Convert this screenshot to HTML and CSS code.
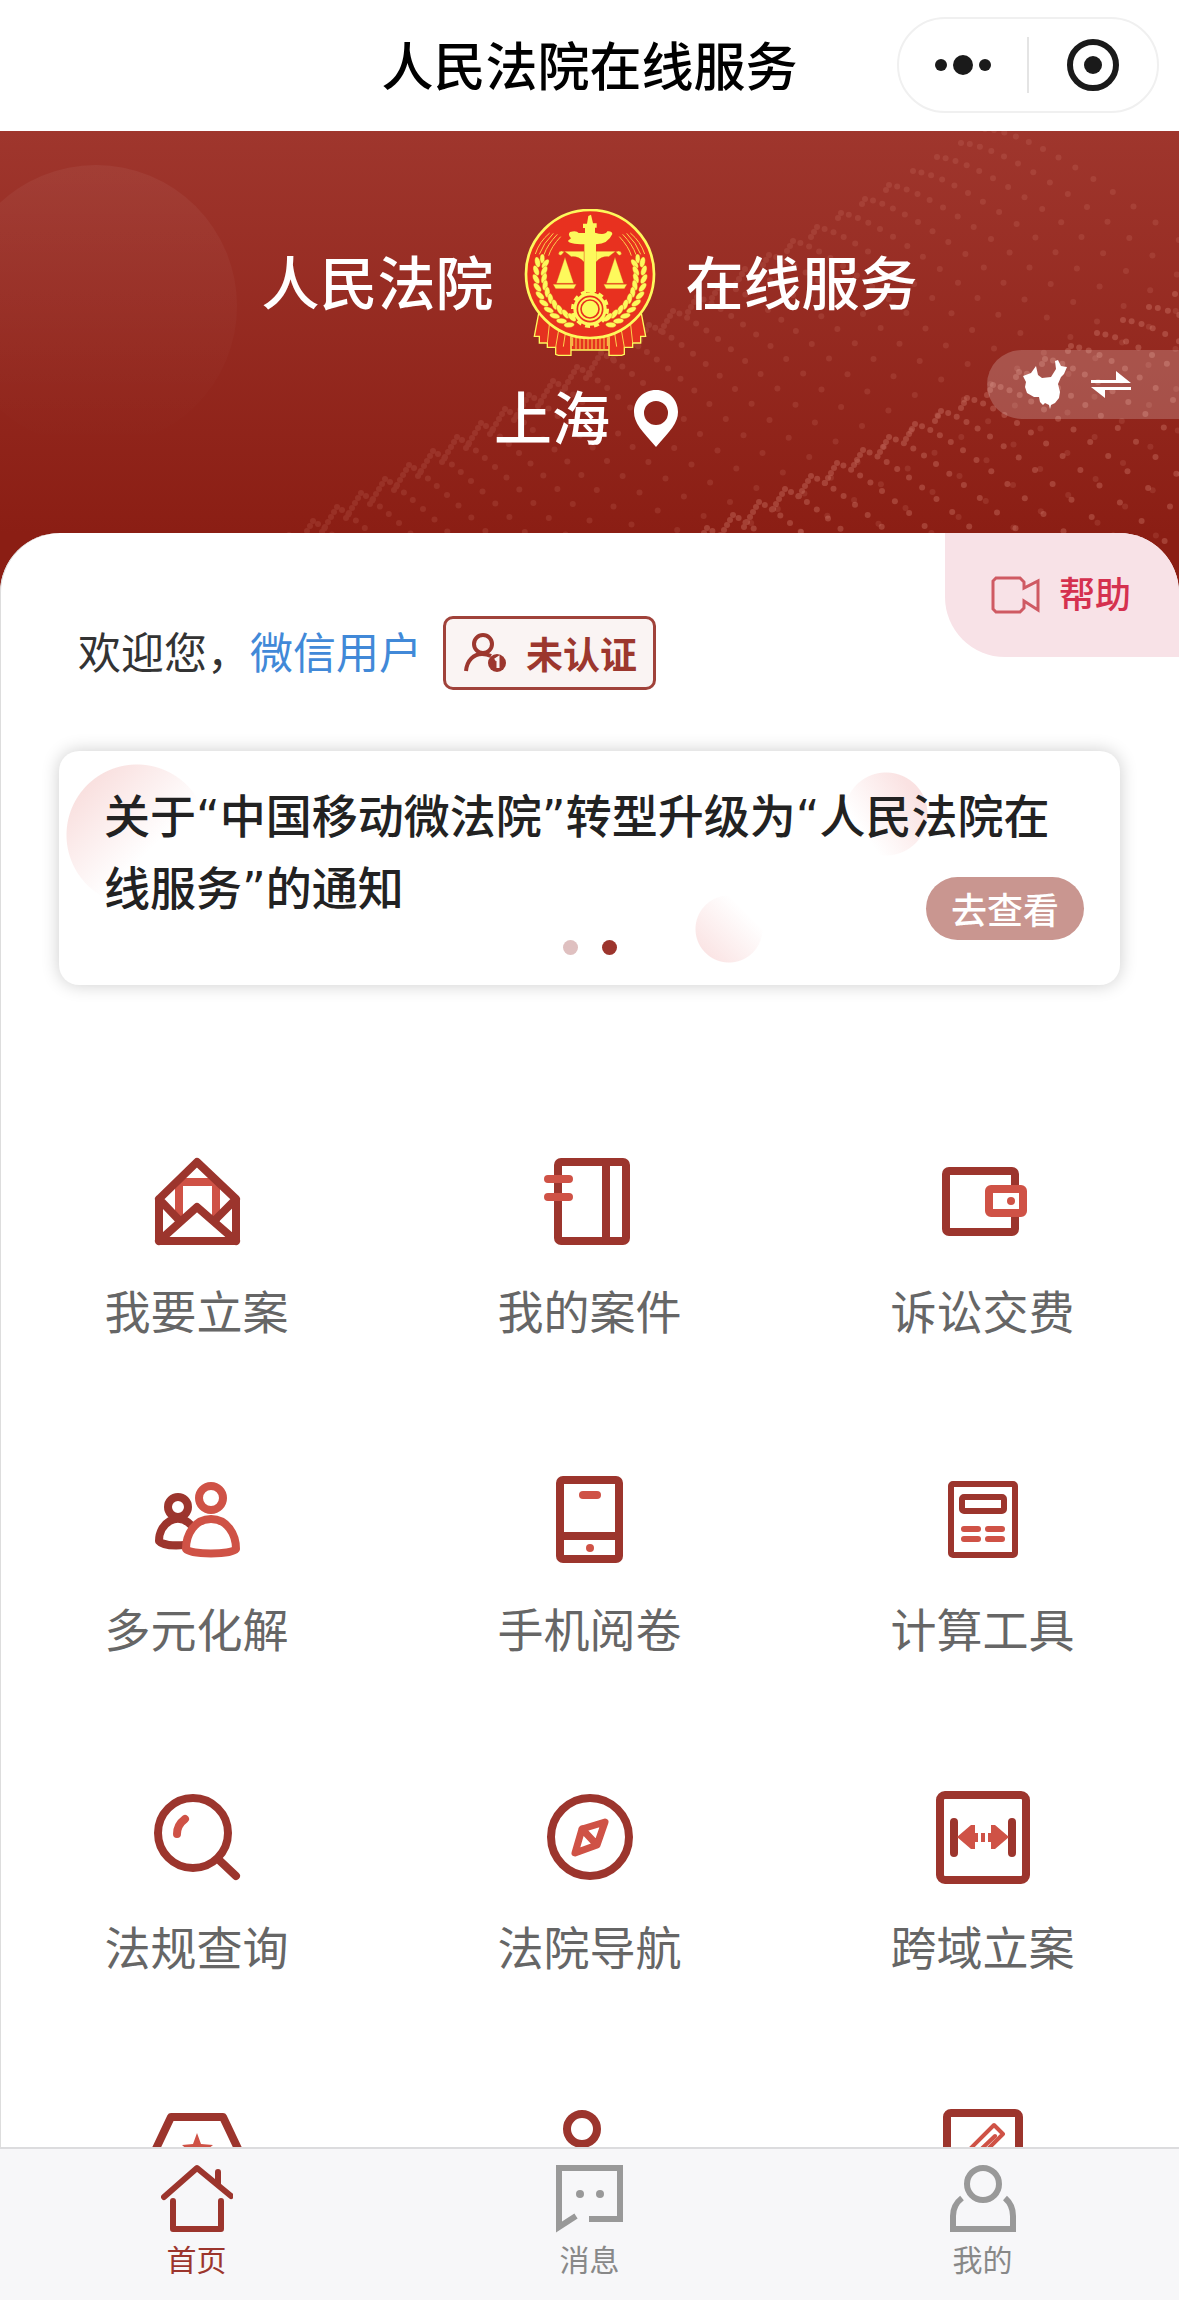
FILE: index.html
```html
<!doctype html>
<html lang="zh-CN">
<head>
    <meta charset="UTF-8">
    <meta name="viewport" content="width=device-width, initial-scale=1.0">
    <title>人民法院在线服务</title>
    <link rel="stylesheet" href="styles.css">
</head>
<body>

<header class="nav-bar">
    <h1>人民法院在线服务</h1>
    <div class="capsule">
        <button type="button" aria-label="更多">
            <svg width="56" height="56" viewBox="0 0 56 56"><circle cx="6" cy="28" r="6"/><circle cx="28" cy="28" r="10"/><circle cx="50" cy="28" r="6"/></svg>
        </button>
        <button type="button" aria-label="关闭">
            <svg width="56" height="56" viewBox="0 0 56 56"><circle class="ring" cx="28" cy="28" r="23"/><circle cx="28" cy="28" r="9"/></svg>
        </button>
    </div>
</header>

<main>
    <section class="banner">
        <svg class="waves" width="1179" height="469" viewBox="0 0 1179 469" aria-hidden="true">
            <defs>
                <linearGradient id="moon" x1="0" y1="0" x2="0" y2="1">
                    <stop offset="0" stop-color="#fff" stop-opacity=".05"/>
                    <stop offset="1" stop-color="#fff" stop-opacity="0"/>
                </linearGradient>
            </defs>
            <circle cx="96" cy="175" r="141" fill="url(#moon)"/>
            <g id="dots"></g>
        </svg>
        <div class="brand">
            <span>人民法院</span>
            <svg class="emblem" width="132" height="147" viewBox="72 57 396 441" role="img" aria-label="法院徽章">
                <defs>
                    <g id="grain">
                        <ellipse cx="108" cy="250" rx="8" ry="16" transform="rotate(-24 108 250)"/>
                        <ellipse cx="132" cy="250" rx="8" ry="16" transform="rotate(24 132 250)"/>
                    </g>
                    <g id="wheat">
                        <ellipse cx="127" cy="206" rx="7" ry="14"/>
                        <use href="#grain" transform="rotate(12 270 255)"/>
                        <use href="#grain" transform="rotate(3 270 255)"/>
                        <use href="#grain" transform="rotate(-6 270 255)"/>
                        <use href="#grain" transform="rotate(-15 270 255)"/>
                        <use href="#grain" transform="rotate(-24 270 255)"/>
                        <use href="#grain" transform="rotate(-33 270 255)"/>
                        <use href="#grain" transform="rotate(-42 270 255)"/>
                        <use href="#grain" transform="rotate(-51 270 255)"/>
                        <use href="#grain" transform="rotate(-60 270 255)"/>
                        <use href="#grain" transform="rotate(-69 270 255)"/>
                    </g>
                    <g id="half">
                        <path class="red" d="M116 370L103 439H118V459H142V472H167V493L175 496H213V440"/>
                        <path class="thin" d="M148 404L142 459M176 420L167 472M196 430L190 470"/>
                        <path class="thin" d="M218 442V468M228 444V478M240 444V480M252 446V480M264 446V480"/>
                    </g>
                    <g id="scale">
                        <path class="thin" d="M106 192Q118 155 149 129M118 193Q130 160 160 130M132 194Q142 164 172 133M146 197Q154 170 182 140"/>
                        <path d="M252 184H200Q192 182 189 190Q182 200 176 193Q174 184 184 183L196 186L214 200Q236 198 252 216Z"/>
                        <path d="M195 202L169 280H221ZM159 283H229L222 296H167Z"/>
                    </g>
                </defs>
                <path class="red" d="M210 430H330V480H210Z"/>
                <use href="#half"/>
                <use href="#half" transform="matrix(-1 0 0 1 540 0)"/>
                <circle class="disc" cx="270" cy="252" r="192"/>
                <g fill="#fdf95c">
                    <use href="#wheat"/>
                    <use href="#wheat" transform="matrix(-1 0 0 1 540 0)"/>
                    <use href="#scale"/>
                    <use href="#scale" transform="matrix(-1 0 0 1 540 0)"/>
                    <path d="M265 78L273 74L279 100H290V113H285V128Q315 138 322 124Q336 122 337 132Q324 162 288 163V306H253V163Q205 162 204 152L213 145Q202 134 210 126Q230 121 236 129H255V114H249V101H261Z"/>
                    <circle cx="270" cy="357" r="50"/>
                    <circle class="cog" cx="270" cy="357" r="52"/>
                </g>
                <circle class="hub" cx="270" cy="357" r="38"/>
                <circle class="hub" cx="270" cy="357" r="27"/>
            </svg>
            <span>在线服务</span>
        </div>
        <button type="button" class="city">
            上海
            <svg width="45" height="57" viewBox="0 0 45 57"><path fill="#fff" fill-rule="evenodd" d="M22 0C9 0 0 10 0 22C0 33 8 41 22 57C36 41 44 33 44 22C44 10 35 0 22 0ZM22 11A12 12 0 1 1 22 35A12 12 0 1 1 22 11Z"/></svg>
        </button>
        <button type="button" class="switch" aria-label="切换地区">
            <svg width="44" height="50" viewBox="0 0 44 50"><path d="M0 16L8 13L13 6L15 15L19 18L28 17L33 9L32 1L35 0L38 6L44 7L41 14L38 17L35 24L37 32L36 38L32 43L28 45L27 49L26 45L22 43L20 45L17 42L16 37L11 37L4 33L2 27L3 22Z"/></svg>
            <svg width="40" height="28" viewBox="0 0 40 28"><path d="M0 9H25V0L40 12H0ZM40 16H0L14 27V19H40Z"/></svg>
        </button>
    </section>

    <section class="sheet">
        <a href="#help" class="help">
            <svg width="50" height="40" viewBox="0 0 50 40"><path d="M5 3H29L33 7V13L47 6V35L33 26V33L29 37H5L2 34V6Z"/></svg>
            帮助
        </a>

        <div class="welcome">
            <p>欢迎您，<a href="#user">微信用户</a></p>
            <button type="button" class="verify">
                <svg width="44" height="42" viewBox="0 0 44 42">
                    <circle cx="19" cy="12" r="9"/>
                    <path d="M2 39C3 28 10 22 18 22C22 22 25 23 27 24"/>
                    <circle class="dot" cx="33" cy="31" r="9"/>
                    <path class="mark" d="M31 28L34 26V36"/>
                </svg>
                未认证
            </button>
        </div>

        <article class="notice">
            <h2>关于“中国移动微法院”转型升级为“人民法院在线服务”的通知</h2>
            <button type="button" class="view">去查看</button>
            <div class="pager">
                <button type="button" aria-label="第一条"></button>
                <button type="button" class="active" aria-label="第二条"></button>
            </div>
        </article>

        <nav class="services">
            <a href="#file">
                <svg viewBox="0 0 96 96"><path class="light" d="M30 66V29H67V66"/><path d="M10 46L48 9L87 46V88H10ZM10 46L30 67M87 46L66 67M10 88L48 54L87 88"/></svg>
                我要立案
            </a>
            <a href="#cases">
                <svg viewBox="0 0 96 96"><rect x="16" y="9" width="68" height="79" rx="3"/><path d="M64 9V88"/><path class="light" d="M6 26H27M6 44H27"/></svg>
                我的案件
            </a>
            <a href="#pay">
                <svg viewBox="0 0 96 96"><rect x="11" y="18" width="69" height="61" rx="3"/><rect class="light filled" x="54" y="36" width="34" height="24" rx="2"/><circle class="spot" cx="76" cy="48" r="4"/></svg>
                诉讼交费
            </a>
            <a href="#mediation">
                <svg viewBox="0 0 96 96"><circle cx="29" cy="36" r="10"/><path d="M42 54C28 40 10 52 10 70C13 74 24 75 36 74"/><circle class="light" cx="62" cy="27" r="12"/><path class="light filled" d="M62 48C46 48 37 63 37 78C42 84 82 84 87 78C87 63 78 48 62 48Z"/></svg>
                多元化解
            </a>
            <a href="#reading">
                <svg viewBox="0 0 96 96"><rect x="18" y="9" width="59" height="79" rx="3"/><path d="M18 65H77"/><path class="light" d="M41 24H55"/><circle class="spot" cx="48" cy="77" r="4"/></svg>
                手机阅卷
            </a>
            <a href="#tools">
                <svg viewBox="0 0 96 96"><g stroke-width="6"><rect x="16" y="13" width="64" height="71" rx="2"/><rect x="27" y="26" width="42" height="14" rx="2"/><path class="light" d="M29 58H43M53 58H67M29 68H43M53 68H67"/></g></svg>
                计算工具
            </a>
            <a href="#laws">
                <svg viewBox="0 0 96 96"><circle cx="44" cy="44" r="35"/><path d="M69 70L87 87"/><path class="light" d="M36 30Q28 36 28 45"/></svg>
                法规查询
            </a>
            <a href="#map">
                <svg viewBox="0 0 96 96"><circle cx="48" cy="48" r="39"/><path class="light" stroke-width="7" d="M63 33L40 40L33 64L55 56ZM40 40L55 56"/></svg>
                法院导航
            </a>
            <a href="#cross">
                <svg viewBox="0 0 96 96"><rect x="5" y="6" width="86" height="85" rx="5"/><path d="M19 33V64M77 33V64"/><path class="spot" d="M22 48L36 36H40V44H43V53H40V60H36ZM46 44H50V53H46ZM74 48L60 36H56V44H53V53H56V60H60Z"/></svg>
                跨域立案
            </a>
            <a href="#rating" aria-label="评价">
                <svg viewBox="0 0 96 96"><path d="M22 10H74L92 48L74 86H22L4 48Z"/><path class="spot" d="M48 26L52 37L64 38L54 46L58 58L48 51L38 58L42 46L33 38L44 37Z"/></svg>
            </a>
            <a href="#judge" aria-label="法官">
                <svg viewBox="0 0 96 96"><circle cx="40" cy="22" r="15"/><path d="M10 88C10 60 22 44 40 44C58 44 70 60 70 88Z"/></svg>
            </a>
            <a href="#sign" aria-label="签名">
                <svg viewBox="0 0 96 96"><rect x="12" y="6" width="72" height="82" rx="4"/><path class="light" stroke-width="4" d="M59 18L68 27L38 57L27 60L30 47ZM60 29L40 48"/></svg>
            </a>
        </nav>
    </section>
</main>

<nav class="tab-bar">
    <a href="#home" class="active">
        <svg viewBox="0 0 72 72" stroke-linecap="round" stroke-linejoin="round"><path d="M3 34L36 5L70 33M57 9V21M12 38V66H60V38"/></svg>
        首页
    </a>
    <a href="#message">
        <svg viewBox="0 0 72 72"><path d="M35 56H66V5H5V64L22 53"/><circle class="eye" cx="26" cy="31" r="4"/><circle class="eye" cx="46" cy="31" r="4"/></svg>
        消息
    </a>
    <a href="#mine">
        <svg viewBox="0 0 72 72"><circle cx="36" cy="21" r="16"/><path d="M15 35Q6 42 6 53V66H66V53Q66 42 58 35"/></svg>
        我的
    </a>
</nav>

<script>
    var dots = document.getElementById('dots');

    // one wave = many arcs, every arc starts on the crest and falls to the right
    function drawWave(x, y, stepX, stepY, arcs, opacity) {
        var html = '';
        for (var k = 0; k < arcs; k++) {
            var px = x - stepX * k;
            var py = y + stepY * k;
            var hook = Math.min(k / 3, 6);
            for (var h = 1; h < hook; h++) {
                html += '<circle cx="' + (px - h * 3) + '" cy="' + (py + h * 5) + '" r="3"/>';
            }
            for (var i = 0; i < 22; i++) {
                html += '<circle cx="' + px.toFixed(1) + '" cy="' + py.toFixed(1) + '" r="3"/>';
                px += 9 + i * 1.3 - Math.min(k / 5, 4);
                py += 1 + i * 1.5 + Math.min(k / 8, 2);
            }
        }
        return '<g fill="#ffb9a8" opacity="' + opacity + '">' + html + '</g>';
    }

    dots.innerHTML = drawWave(985, -2, 24, 14, 32, 0.11) + drawWave(1175, 163, 26, 13, 26, 0.22);
</script>
</body>
</html>
```
FILE: styles.css
```css
* {
    box-sizing: border-box;
    margin: 0;
    padding: 0;
}

body {
    display: flex;
    flex-direction: column;
    height: 100vh;
    background-color: #fff;
    font-family: "Noto Sans", "Noto Sans CJK SC", sans-serif;
}

a {
    color: inherit;
    text-decoration: none;
}

button {
    border: none;
    background: none;
    color: inherit;
    font-family: inherit;
    cursor: pointer;
}

svg {
    display: block;
    flex: none;
}

/* top bar */
.nav-bar {
    display: grid;
    grid-template-columns: 1fr auto 1fr;
    align-items: center;
    flex: none;
    height: 131px;
}

.nav-bar h1 {
    grid-column: 2;
    font-size: 52px;
    font-weight: 500;
    line-height: 72px;
    color: #000;
}

.capsule {
    display: flex;
    align-items: center;
    justify-self: end;
    width: 262px;
    height: 96px;
    margin: 0 20px 2px 0;
    border: 2px solid #f0f0f0;
    border-radius: 48px;
}

.capsule button {
    display: flex;
    flex: 1;
    justify-content: center;
    fill: #1a1a1a;
}

.capsule button + button {
    border-left: 2px solid #e4e4e4;
}

.capsule .ring {
    fill: none;
    stroke: #1a1a1a;
    stroke-width: 6;
}

main {
    flex: 1;
    min-height: 0;
    overflow: hidden;
}

/* banner */
.banner {
    position: relative;
    padding: 78px 0 152px;
    overflow: hidden;
    background: linear-gradient(#9f362d, #8b1e14 402px);
    color: #fff;
    font-size: 58px;
    font-weight: 500;
    line-height: 60px;
}

.waves {
    position: absolute;
    top: 0;
    right: 0;
}

.brand,
.city {
    position: relative;
    display: flex;
    align-items: center;
    justify-content: center;
}

.brand {
    gap: 30px;
}

.city {
    gap: 24px;
    margin: 32px auto 0;
    padding-right: 6px;
    font-size: inherit;
    font-weight: inherit;
    line-height: inherit;
}

.emblem .red {
    fill: #e5321f;
    stroke: #fdf95c;
    stroke-width: 4;
}

.emblem .thin {
    fill: none;
    stroke: #fdd04c;
    stroke-width: 3;
}

.emblem .disc {
    fill: #e8311f;
    stroke: #fdf95c;
    stroke-width: 8;
}

.emblem use {
    stroke: #d8501c;
    stroke-width: 1;
}

.emblem .cog {
    fill: none;
    stroke: #fdf95c;
    stroke-width: 10;
    stroke-dasharray: 15 12;
}

.emblem .hub {
    fill: none;
    stroke: #e8311f;
    stroke-width: 5;
}

.switch {
    position: absolute;
    top: 219px;
    right: 0;
    display: flex;
    align-items: center;
    gap: 24px;
    height: 69px;
    padding: 0 48px 0 36px;
    border-radius: 35px 0 0 35px;
    background-color: rgba(255, 255, 255, .2);
    fill: #fff;
}

/* white sheet */
.sheet {
    position: relative;
    margin-top: -67px;
    padding-top: 83px;
    border-radius: 60px 60px 0 0;
    background-color: #fff;
    box-shadow: inset 1px 0 #ddd;
}

.help {
    position: absolute;
    top: 0;
    right: 0;
    display: flex;
    align-items: center;
    gap: 18px;
    height: 124px;
    padding: 0 48px 0 46px;
    border-radius: 0 60px 0 60px;
    background-color: #f8e2e7;
    color: #d5314f;
    font-size: 36px;
    font-weight: 500;
    line-height: 48px;
}

.help svg {
    fill: none;
    stroke: #cf5a63;
    stroke-width: 3;
}

.welcome {
    display: flex;
    align-items: center;
    gap: 21px;
    padding-left: 78px;
    color: #333;
    font-size: 43px;
    line-height: 60px;
}

.welcome a {
    color: #4189d8;
}

.verify {
    display: flex;
    align-items: center;
    gap: 18px;
    height: 74px;
    padding: 0 16px 0 18px;
    border: 3px solid #a0423a;
    border-radius: 10px;
    background-color: #faf4f3;
    color: #9c372e;
    font-size: 37px;
    font-weight: 700;
}

.verify svg {
    fill: none;
    stroke: #9c372e;
    stroke-width: 4;
}

.verify .dot {
    fill: #9c372e;
    stroke: none;
}

.verify .mark {
    stroke: #faf4f3;
    stroke-width: 3;
}

/* notice */
.notice {
    position: relative;
    min-height: 234px;
    margin: 61px 59px 0;
    padding: 30px 60px 60px 45px;
    border-radius: 20px;
    background:
        radial-gradient(circle at 78px 84px, transparent 70px, #fff 71px) 0 0 / 200px 100% no-repeat,
        radial-gradient(circle at 50px 63px, transparent 41px, #fff 42px) 777px 0 / 100px 100% no-repeat,
        radial-gradient(circle at 50px 178px, transparent 33px, #fff 34px) 620px 0 / 100px 100% no-repeat,
        linear-gradient(135deg, #f9e0df 15%, #fff 60%) 7px 13px / 142px 142px no-repeat,
        linear-gradient(235deg, #fae2e2 20%, #fff 75%) 785px 21px / 84px 84px no-repeat,
        linear-gradient(45deg, #fae2e2 10%, #fff 75%) 636px 144px / 68px 68px no-repeat,
        #fff;
    box-shadow: 0 0 18px rgba(0, 0, 0, .2);
}

.notice h2 {
    color: #222;
    font-family: "DejaVu Sans", "Noto Sans CJK SC", sans-serif;
    font-size: 46px;
    font-weight: 500;
    line-height: 72px;
}

.view {
    position: absolute;
    right: 36px;
    bottom: 45px;
    height: 63px;
    padding: 0 25px;
    border-radius: 32px;
    background-color: #c99690;
    color: #fff;
    font-size: 36px;
    font-weight: 500;
}

.pager {
    position: absolute;
    right: 0;
    bottom: 30px;
    left: 0;
    display: flex;
    justify-content: center;
    gap: 24px;
}

.pager button {
    width: 15px;
    height: 15px;
    border-radius: 50%;
    background-color: #dfc0c0;
}

.pager .active {
    background-color: #9c352d;
}

/* services */
.services {
    display: grid;
    grid-template-columns: repeat(3, 1fr);
    grid-auto-rows: 318px;
    margin-top: 168px;
}

.services a {
    display: flex;
    flex-direction: column;
    align-items: center;
    gap: 32px;
    color: #666;
    font-size: 46px;
    line-height: 60px;
}

.services svg {
    width: 96px;
    height: 96px;
    fill: none;
    stroke: #9c352d;
    stroke-width: 8;
    stroke-linecap: round;
    stroke-linejoin: round;
}

.services .light {
    stroke: #cf5246;
}

.services .filled {
    fill: #fff;
}

.services .spot {
    fill: #cf5246;
    stroke: none;
}

/* bottom tabs */
.tab-bar {
    display: flex;
    flex: none;
    height: 153px;
    padding-top: 14px;
    border-top: 2px solid #dcdcde;
    background-color: #f7f7f9;
}

.tab-bar a {
    display: flex;
    flex: 1;
    flex-direction: column;
    align-items: center;
    gap: 7px;
    color: #888;
    font-size: 30px;
    line-height: 36px;
}

.tab-bar svg {
    width: 72px;
    height: 72px;
    fill: none;
    stroke: #999;
    stroke-width: 6;
}

.tab-bar .eye {
    fill: #999;
    stroke: none;
}

.tab-bar .active {
    color: #9c352d;
}

.tab-bar .active svg {
    stroke: #9c352d;
}
```
